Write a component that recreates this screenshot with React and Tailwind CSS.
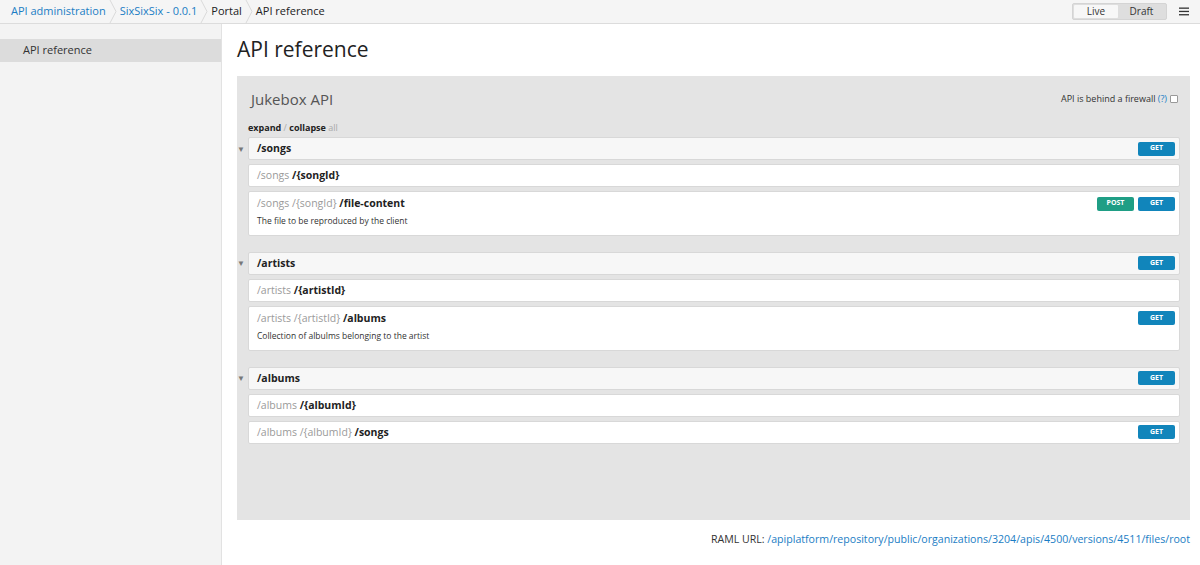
import React from 'react';

const Sep = () => (
  <svg width="10" height="23" viewBox="0 0 10 23" className="shrink-0">
    <polyline points="2,0 8,11.5 2,23" fill="none" stroke="#dadada" strokeWidth="1" />
  </svg>
);

const Method = ({ type }) => (
  <span
    className={`inline-flex items-center justify-center w-[37px] h-[14px] rounded-[2px] text-[7px] font-bold text-white ${
      type === 'POST' ? 'bg-[#1f9e85]' : 'bg-[#1185bb]'
    }`}
  >
    {type}
  </span>
);

const Row = ({ parts, methods = [], desc, head }) => (
  <div
    className={`border border-[#d8d8d8] rounded-[2px] px-[8px] ${head ? 'bg-[#f7f7f7]' : 'bg-white'} ${
      desc ? 'pt-[4px] pb-[7px]' : 'h-[23px] flex items-center'
    }`}
  >
    <div className="flex items-center justify-between w-full h-[15px]">
      <div className="text-[10.5px] leading-none">
        {parts.map((p, i) => (
          <span key={i} className={p.dim ? 'text-[#9a9a9a]' : 'text-[#222] font-bold'}>
            {i > 0 ? ' ' : ''}
            {p.t}
          </span>
        ))}
      </div>
      <div className="flex gap-[4px] -mr-[4px]">
        {methods.map((m) => (
          <Method key={m} type={m} />
        ))}
      </div>
    </div>
    {desc && <div className="text-[8.5px] text-[#333] mt-[4px]">{desc}</div>}
  </div>
);

const groups = [
  {
    name: '/songs',
    methods: ['GET'],
    rows: [
      { parts: [{ t: '/songs', dim: true }, { t: '/{songId}' }] },
      {
        parts: [{ t: '/songs', dim: true }, { t: '/{songId}', dim: true }, { t: '/file-content' }],
        methods: ['POST', 'GET'],
        desc: 'The file to be reproduced by the client',
      },
    ],
  },
  {
    name: '/artists',
    methods: ['GET'],
    rows: [
      { parts: [{ t: '/artists', dim: true }, { t: '/{artistId}' }] },
      {
        parts: [{ t: '/artists', dim: true }, { t: '/{artistId}', dim: true }, { t: '/albums' }],
        methods: ['GET'],
        desc: 'Collection of albulms belonging to the artist',
      },
    ],
  },
  {
    name: '/albums',
    methods: ['GET'],
    rows: [
      { parts: [{ t: '/albums', dim: true }, { t: '/{albumId}' }] },
      {
        parts: [{ t: '/albums', dim: true }, { t: '/{albumId}', dim: true }, { t: '/songs' }],
        methods: ['GET'],
      },
    ],
  },
];

export default function App() {
  return (
    <div className="w-[1200px] h-[565px] bg-white overflow-hidden font-['Open_Sans',sans-serif] text-[#333]">
      {/* top bar */}
      <div className="h-[24px] bg-[#f5f5f5] border-b border-[#dcdcdc] flex items-center justify-between pl-[11px] pr-[11px]">
        <div className="flex items-center text-[11px]">
          <span className="text-[#1a7dc4]">API administration</span>
          <span className="mx-[2px]"><Sep /></span>
          <span className="text-[#1a7dc4]">SixSixSix - 0.0.1</span>
          <span className="mx-[2px]"><Sep /></span>
          <span className="text-[#222]">Portal</span>
          <span className="mx-[2px]"><Sep /></span>
          <span className="text-[#222]">API reference</span>
        </div>
        <div className="flex items-center gap-[12px]">
          <div className="flex h-[17px] bg-[#dedede] border border-[#d4d4d4] rounded-[2px] p-[1px] text-[10px] text-[#333]">
            <span className="w-[44px] bg-[#f7f7f7] rounded-[1px] flex items-center justify-center">Live</span>
            <span className="w-[47px] flex items-center justify-center">Draft</span>
          </div>
          <svg width="10" height="9" viewBox="0 0 10 9">
            <rect x="0" y="0.5" width="10" height="1.3" fill="#333" />
            <rect x="0" y="3.8" width="10" height="1.3" fill="#333" />
            <rect x="0" y="7.1" width="10" height="1.3" fill="#333" />
          </svg>
        </div>
      </div>

      <div className="flex h-[541px]">
        {/* sidebar */}
        <div className="w-[222px] bg-[#f3f3f3] border-r border-[#e2e2e2] pt-[15px] shrink-0">
          <div className="h-[23px] bg-[#dcdcdc] flex items-center pl-[23px] text-[11px] text-[#333]">API reference</div>
        </div>

        {/* main */}
        <div className="flex-1 pl-[15px] pr-[10px]">
          <h1 className="h-[52px] flex items-center text-[21px] text-[#222] font-normal">API reference</h1>
          <div className="h-[444px] bg-[#e4e4e4] pl-[11px] pr-[10px] pt-[12px]">
            <div className="flex items-start justify-between pl-[3px]">
              <div className="text-[15px] text-[#555] leading-[22px]">Jukebox API</div>
              <div className="flex items-center gap-[3px] text-[9px] text-[#333] mt-[4px] mr-[2px]">
                <span>
                  API is behind a firewall <span className="text-[#1a7dc4]">(?)</span>
                </span>
                <span className="w-[8px] h-[8px] bg-white border border-[#999] rounded-[1px]" />
              </div>
            </div>
            <div className="text-[9px] mt-[12px] mb-[3px] leading-[12px]">
              <span className="font-bold text-[#222]">expand</span>
              <span className="text-[#aaa]"> / </span>
              <span className="font-bold text-[#222]">collapse</span>
              <span className="text-[#aaa]"> all</span>
            </div>
            <div className="flex flex-col gap-[16px]">
              {groups.map((g) => (
                <div key={g.name} className="flex flex-col gap-[4px]">
                  <div className="flex items-center">
                    <span className="-ml-[11px] w-[11px] text-[8px] text-[#777] leading-none">▼</span>
                    <div className="flex-1">
                      <Row head parts={[{ t: g.name }]} methods={g.methods} />
                    </div>
                  </div>
                  {g.rows.map((r, i) => (
                    <Row key={i} {...r} />
                  ))}
                </div>
              ))}
            </div>
          </div>
          <div className="text-right text-[10.6px] text-[#333] mt-[12px]">
            RAML URL: <span className="text-[#1a7dc4]">/apiplatform/repository/public/organizations/3204/apis/4500/versions/4511/files/root</span>
          </div>
        </div>
      </div>
    </div>
  );
}
